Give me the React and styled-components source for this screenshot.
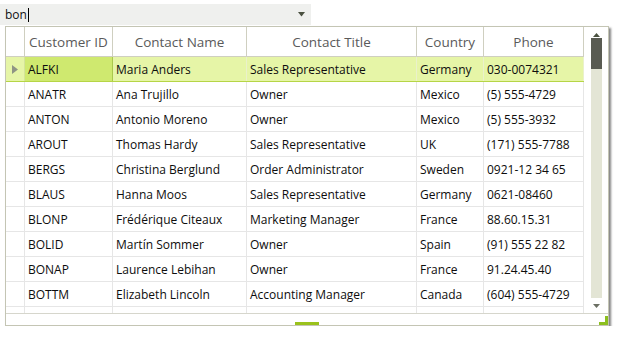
import React from 'react';
import styled, { createGlobalStyle } from 'styled-components';

const GlobalStyle = createGlobalStyle`
    body {
        margin: 0;
        background: #ffffff;
        font-family: 'Segoe UI', 'Open Sans', 'Noto Sans', sans-serif;
    }
`;

const columns = [
    { key: 'id', title: 'Customer ID', width: 88 },
    { key: 'name', title: 'Contact Name', width: 134 },
    { key: 'title', title: 'Contact Title', width: 170 },
    { key: 'country', title: 'Country', width: 67 },
    { key: 'phone', title: 'Phone', width: 100 },
];

const customers = [
    ['ALFKI', 'Maria Anders', 'Sales Representative', 'Germany', '030-0074321'],
    ['ANATR', 'Ana Trujillo', 'Owner', 'Mexico', '(5) 555-4729'],
    ['ANTON', 'Antonio Moreno', 'Owner', 'Mexico', '(5) 555-3932'],
    ['AROUT', 'Thomas Hardy', 'Sales Representative', 'UK', '(171) 555-7788'],
    ['BERGS', 'Christina Berglund', 'Order Administrator', 'Sweden', '0921-12 34 65'],
    ['BLAUS', 'Hanna Moos', 'Sales Representative', 'Germany', '0621-08460'],
    ['BLONP', 'Frédérique Citeaux', 'Marketing Manager', 'France', '88.60.15.31'],
    ['BOLID', 'Martín Sommer', 'Owner', 'Spain', '(91) 555 22 82'],
    ['BONAP', 'Laurence Lebihan', 'Owner', 'France', '91.24.45.40'],
    ['BOTTM', 'Elizabeth Lincoln', 'Accounting Manager', 'Canada', '(604) 555-4729'],
    ['', '', '', '', ''],
];

const template = `19px ${columns.map((c) => c.width + 'px').join(' ')}`;

function App() {
    return (
        <>
            <GlobalStyle />
            <Combo>
                <ComboText>
                    bon<Caret />
                </ComboText>
                <ComboArrow viewBox="0 0 7 5">
                    <path d="M0 0h7L3.5 4.5z" fill="#4a5140" />
                </ComboArrow>
            </Combo>
            <Popup>
                <Body>
                    <Grid>
                        <HeaderRow>
                            <HeaderCell />
                            {columns.map((c) => (
                                <HeaderCell key={c.key}>{c.title}</HeaderCell>
                            ))}
                        </HeaderRow>
                        {customers.map((row, i) => (
                            <Row key={i} selected={i === 0} partial={i === customers.length - 1}>
                                <Indicator selected={i === 0}>
                                    {i === 0 && (
                                        <svg width="6" height="9" viewBox="0 0 6 9">
                                            <path d="M0 0l6 4.5L0 9z" fill="#8f9485" />
                                        </svg>
                                    )}
                                </Indicator>
                                {row.map((value, j) => (
                                    <Cell key={j} current={i === 0 && j === 0} selected={i === 0}>
                                        {value}
                                    </Cell>
                                ))}
                            </Row>
                        ))}
                    </Grid>
                    <ScrollBar>
                        <ScrollArrow viewBox="0 0 7 4">
                            <path d="M3.5 0L7 4H0z" fill="#4a5140" />
                        </ScrollArrow>
                        <Track>
                            <Thumb />
                        </Track>
                        <ScrollArrow viewBox="0 0 7 4">
                            <path d="M0 0h7L3.5 4z" fill="#6b6f63" />
                        </ScrollArrow>
                    </ScrollBar>
                </Body>
                <Footer>
                    <Grip />
                    <Corner viewBox="0 0 9 9">
                        <path d="M6 0h3v9H0V6h6z" fill="#8cbf1f" />
                    </Corner>
                </Footer>
            </Popup>
        </>
    );
}

export default App;

const Combo = styled.div`
    margin-top: 4px;
    width: 311px;
    height: 21px;
    background: #eff0ee;
    display: flex;
    align-items: center;
    justify-content: space-between;
    box-sizing: border-box;
    padding: 0 6px 0 5px;
`;

const ComboText = styled.span`
    font-size: 12px;
    color: #111111;
    display: flex;
    align-items: center;
`;

const Caret = styled.span`
    display: inline-block;
    width: 1px;
    height: 14px;
    background: #000;
    margin-left: 1px;
`;

const ComboArrow = styled.svg`
    width: 7px;
    height: 5px;
`;

const Popup = styled.div`
    margin-left: 5px;
    margin-top: 1px;
    width: 604px;
    height: 300px;
    box-sizing: border-box;
    border: 1px solid #c4c5b4;
    background: #ffffff;
    box-shadow: 2px 2px 2px rgba(50, 50, 50, 0.6);
    display: flex;
    flex-direction: column;
`;

const Body = styled.div`
    display: flex;
    height: 286px;
    border-bottom: 1px solid #d6d6cc;
`;

const Grid = styled.div`
    width: 578px;
    overflow: hidden;
`;

const HeaderRow = styled.div`
    display: grid;
    grid-template-columns: ${template};
    height: 30px;
    border-bottom: 1px solid #cfcfc0;
    box-sizing: border-box;
`;

const HeaderCell = styled.div`
    display: flex;
    align-items: center;
    justify-content: center;
    font-size: 13.5px;
    color: #5a5a5a;
    border-right: 1px solid #cfcfc0;
    white-space: nowrap;
    overflow: hidden;
`;

const Row = styled.div`
    display: grid;
    grid-template-columns: ${template};
    height: ${(p) => (p.partial ? '7px' : '25px')};
    box-sizing: border-box;
    border-bottom: ${(p) => (p.partial ? 'none' : p.selected ? '1px solid #b6d546' : '1px solid #e6e6e6')};
    background: ${(p) => (p.selected ? '#e6f5a7' : '#ffffff')};
`;

const Indicator = styled.div`
    display: flex;
    align-items: center;
    justify-content: center;
    border-right: 1px solid ${(p) => (p.selected ? '#d4e49a' : '#e6e6e6')};
`;

const Cell = styled.div`
    display: flex;
    align-items: center;
    padding-left: 3px;
    font-size: 12px;
    color: #0d0d0d;
    white-space: nowrap;
    overflow: hidden;
    background: ${(p) => (p.current ? '#cfe96f' : 'transparent')};
    border-right: 1px solid ${(p) => (p.current ? '#a9c84c' : p.selected ? '#eaf1cb' : '#e6e6e6')};
`;

const ScrollBar = styled.div`
    width: 24px;
    display: flex;
    flex-direction: column;
    align-items: center;
    padding: 6px 0 5px;
    box-sizing: border-box;
`;

const ScrollArrow = styled.svg`
    width: 7px;
    height: 4px;
    flex: none;
`;

const Track = styled.div`
    flex: 1;
    width: 11px;
    margin: 1px 0 6px;
    background: #e3e5d5;
`;

const Thumb = styled.div`
    height: 31px;
    background: #595b52;
`;

const Footer = styled.div`
    flex: 1;
    display: flex;
    align-items: flex-end;
    justify-content: center;
    position: relative;
`;

const Grip = styled.div`
    width: 24px;
    height: 3px;
    background: #9ac21c;
`;

const Corner = styled.svg`
    position: absolute;
    right: 0;
    bottom: 0;
    width: 9px;
    height: 9px;
`;
